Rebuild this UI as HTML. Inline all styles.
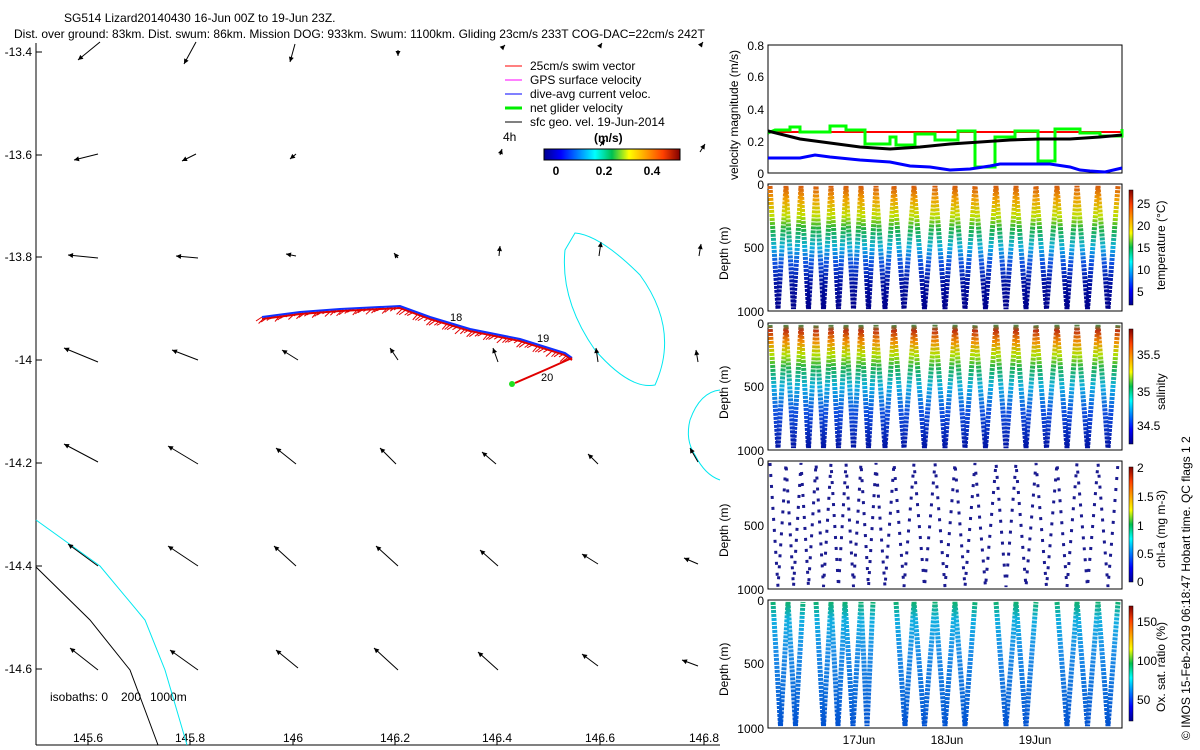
<!DOCTYPE html>
<html><head><meta charset="utf-8"><style>
html,body{margin:0;padding:0;background:#fff;width:1200px;height:750px;overflow:hidden}
svg{display:block;font-family:"Liberation Sans",sans-serif;font-size:12px}
</style></head><body>
<svg id="s" width="1200" height="750" viewBox="0 0 1200 750">
<defs>
<linearGradient id="jet" x1="0" y1="0" x2="1" y2="0">
<stop offset="0" stop-color="#00008f"/><stop offset="0.125" stop-color="#0000ff"/><stop offset="0.375" stop-color="#00ffff"/><stop offset="0.5" stop-color="#00c050"/><stop offset="0.625" stop-color="#ffff00"/><stop offset="0.875" stop-color="#ff4000"/><stop offset="1" stop-color="#800000"/></linearGradient>
<linearGradient id="jetv" x1="0" y1="1" x2="0" y2="0">
<stop offset="0" stop-color="#00008f"/><stop offset="0.125" stop-color="#0000ff"/><stop offset="0.375" stop-color="#00ffff"/><stop offset="0.5" stop-color="#00c050"/><stop offset="0.625" stop-color="#ffff00"/><stop offset="0.875" stop-color="#ff4000"/><stop offset="1" stop-color="#800000"/></linearGradient>
<linearGradient id="tg" gradientUnits="userSpaceOnUse" x1="0" y1="184" x2="0" y2="311">
<stop offset="0" stop-color="#d05010"/><stop offset="0.12" stop-color="#f0a000"/><stop offset="0.25" stop-color="#c0e000"/><stop offset="0.35" stop-color="#20b040"/><stop offset="0.5" stop-color="#10b0e0"/><stop offset="0.62" stop-color="#1050e0"/><stop offset="0.78" stop-color="#0010a0"/><stop offset="1" stop-color="#00008a"/></linearGradient>
<linearGradient id="sg" gradientUnits="userSpaceOnUse" x1="0" y1="323" x2="0" y2="450">
<stop offset="0" stop-color="#20b060"/><stop offset="0.06" stop-color="#c03010"/><stop offset="0.15" stop-color="#f09000"/><stop offset="0.25" stop-color="#b0e000"/><stop offset="0.35" stop-color="#20b050"/><stop offset="0.5" stop-color="#10b0e0"/><stop offset="0.7" stop-color="#1050e0"/><stop offset="1" stop-color="#0010a0"/></linearGradient>
<linearGradient id="og" gradientUnits="userSpaceOnUse" x1="0" y1="600" x2="0" y2="728">
<stop offset="0" stop-color="#10b060"/><stop offset="0.15" stop-color="#10b0e0"/><stop offset="0.4" stop-color="#2090e8"/><stop offset="1" stop-color="#0050d0"/></linearGradient>
</defs>
<!-- titles -->
<text x="64" y="22">SG514 Lizard20140430 16-Jun 00Z to 19-Jun 23Z.</text>
<text x="14" y="38">Dist. over ground: 83km. Dist. swum: 86km. Mission DOG: 933km. Swum: 1100km. Gliding 23cm/s 233T COG-DAC=22cm/s 242T</text>
<!-- map axes -->
<line x1="36" y1="43" x2="36" y2="745" stroke="#000"/>
<line x1="36" y1="745" x2="720" y2="745" stroke="#000"/>
<g stroke="#000">
<line x1="36" y1="52" x2="42" y2="52"/><line x1="36" y1="155" x2="42" y2="155"/><line x1="36" y1="257" x2="42" y2="257"/><line x1="36" y1="360" x2="42" y2="360"/><line x1="36" y1="463" x2="42" y2="463"/><line x1="36" y1="566" x2="42" y2="566"/><line x1="36" y1="669" x2="42" y2="669"/>
<line x1="88" y1="745" x2="88" y2="739"/><line x1="190" y1="745" x2="190" y2="739"/><line x1="293" y1="745" x2="293" y2="739"/><line x1="395" y1="745" x2="395" y2="739"/><line x1="497" y1="745" x2="497" y2="739"/><line x1="600" y1="745" x2="600" y2="739"/><line x1="704" y1="745" x2="704" y2="739"/>
</g>
<g font-size="12" text-anchor="end">
<text x="32" y="56">-13.4</text><text x="32" y="159">-13.6</text><text x="32" y="261">-13.8</text><text x="32" y="364">-14</text><text x="32" y="467">-14.2</text><text x="32" y="570">-14.4</text><text x="32" y="673">-14.6</text></g>
<g font-size="12" text-anchor="middle">
<text x="88" y="742">145.6</text><text x="190" y="742">145.8</text><text x="293" y="742">146</text><text x="395" y="742">146.2</text><text x="497" y="742">146.4</text><text x="600" y="742">146.6</text><text x="704" y="742">146.8</text></g>
<text x="50" y="701">isobaths: 0</text><text x="121" y="701">200</text><text x="150" y="701">1000m</text>
<!-- contours -->
<path d="M36 520 L100 566 L145 620 L165 670 L187 745" fill="none" stroke="#00e8f0"/>
<path d="M36 567 L90 620 L130 670 L145 710 L158 745" fill="none" stroke="#000"/>
<path d="M575 233 Q600 235 640 275 Q680 330 655 385 Q630 390 595 350 Q560 300 565 250 Z" fill="none" stroke="#00e8f0"/>
<path d="M720 390 Q700 392 690 420 Q685 440 695 455 Q705 475 720 480" fill="none" stroke="#00e8f0"/>
<!-- track -->
<g id="trk"></g>
<path d="M262 317 L300 312 L340 309 L400 306 L430 317 L470 329 L520 339 L565 353 L572 358" fill="none" stroke="#1030ff" stroke-width="2"/>
<path d="M572 358 L545 370 L515 383" fill="none" stroke="#e00000" stroke-width="2"/>
<circle cx="512" cy="384" r="3" fill="#20e020"/>
<text x="450" y="321" font-size="11">18</text><text x="537" y="342" font-size="11">19</text><text x="541" y="381" font-size="11">20</text>
<!-- legend -->
<g font-size="12">
<line x1="505" y1="66" x2="522" y2="66" stroke="#f00"/><text x="530" y="70">25cm/s swim vector</text>
<line x1="505" y1="80" x2="522" y2="80" stroke="#f0f"/><text x="530" y="84">GPS surface velocity</text>
<line x1="505" y1="94" x2="522" y2="94" stroke="#00f"/><text x="530" y="98">dive-avg current veloc.</text>
<line x1="505" y1="108" x2="522" y2="108" stroke="#0e0" stroke-width="3"/><text x="530" y="112">net glider velocity</text>
<line x1="505" y1="122" x2="522" y2="122" stroke="#000"/><text x="530" y="126">sfc geo. vel. 19-Jun-2014</text>
<text x="503" y="141">4h</text>
<text x="594" y="142" font-weight="bold">(m/s)</text>
<rect x="544" y="149" width="136" height="11" fill="url(#jet)" stroke="#000"/>
<text x="556" y="175" font-weight="bold" text-anchor="middle">0</text>
<text x="604" y="175" font-weight="bold" text-anchor="middle">0.2</text>
<text x="652" y="175" font-weight="bold" text-anchor="middle">0.4</text>
</g>
<!-- right panels -->
<g fill="none" stroke="#000">
<rect x="768" y="45" width="354" height="128"/>
<rect x="768" y="184" width="354" height="127"/>
<rect x="768" y="323" width="354" height="127"/>
<rect x="768" y="461" width="354" height="128"/>
<rect x="768" y="600" width="354" height="128"/>
</g>
<g font-size="12" text-anchor="end">
<text x="764" y="50">0.8</text><text x="764" y="81">0.6</text><text x="764" y="114">0.4</text><text x="764" y="146">0.2</text><text x="764" y="178">0</text>
<text x="764" y="189">0</text><text x="764" y="252">500</text><text x="764" y="316">1000</text>
<text x="764" y="328">0</text><text x="764" y="391">500</text><text x="764" y="455">1000</text>
<text x="764" y="466">0</text><text x="764" y="530">500</text><text x="764" y="594">1000</text>
<text x="764" y="605">0</text><text x="764" y="668">500</text><text x="764" y="733">1000</text>
</g>
<g font-size="12" text-anchor="middle">
<text x="859" y="744">17Jun</text><text x="947" y="744">18Jun</text><text x="1035" y="744">19Jun</text></g>
<text transform="translate(738,180) rotate(-90)" font-size="12">velocity magnitude (m/s)</text>
<text transform="translate(728,280) rotate(-90)">Depth (m)</text>
<text transform="translate(728,419) rotate(-90)">Depth (m)</text>
<text transform="translate(728,557) rotate(-90)">Depth (m)</text>
<text transform="translate(728,696) rotate(-90)">Depth (m)</text>
<!-- colorbars -->
<rect x="1129" y="190" width="4" height="115" fill="url(#jetv)" stroke="#000" stroke-width="0.5"/>
<rect x="1129" y="329" width="4" height="115" fill="url(#jetv)" stroke="#000" stroke-width="0.5"/>
<rect x="1129" y="467" width="4" height="115" fill="url(#jetv)" stroke="#000" stroke-width="0.5"/>
<rect x="1129" y="606" width="4" height="115" fill="url(#jetv)" stroke="#000" stroke-width="0.5"/>
<g font-size="12">
<text x="1137" y="208">25</text><text x="1137" y="230">20</text><text x="1137" y="252">15</text><text x="1137" y="274">10</text><text x="1137" y="296">5</text>
<text x="1137" y="359">35.5</text><text x="1137" y="396">35</text><text x="1137" y="430">34.5</text>
<text x="1137" y="472">2</text><text x="1137" y="501">1.5</text><text x="1137" y="530">1</text><text x="1137" y="558">0.5</text><text x="1137" y="586">0</text>
<text x="1137" y="626">150</text><text x="1137" y="665">100</text><text x="1137" y="704">50</text>
</g>
<text transform="translate(1165,290) rotate(-90)">temperature (°C)</text>
<text transform="translate(1165,410) rotate(-90)">salinity</text>
<text transform="translate(1165,568) rotate(-90)">chl-a (mg m-3)</text>
<text transform="translate(1165,712) rotate(-90)">Ox. sat. ratio (%)</text>
<text transform="translate(1190,740) rotate(-90)">© IMOS 15-Feb-2019 06:18:47 Hobart time. QC flags 1  2</text>
<!-- velocity lines -->
<polyline fill="none" stroke="#f00" stroke-width="2" points="768,132 1122,132"/>
<polyline fill="none" stroke="#0f0" stroke-width="3" points="768,133 775,130 790,130 790,127 800,127 800,132 830,132 830,126 846,126 846,130 865,130 865,144 890,144 890,137 896,137 896,145 915,145 915,134 935,134 935,140 958,140 958,131 975,131 975,167 995,167 995,137 1015,137 1015,131 1038,131 1038,161 1055,161 1055,129 1080,129 1080,133 1100,133 1100,136 1122,136 1122,129"/>
<polyline fill="none" stroke="#000" stroke-width="3" points="768,131 800,139 830,143 860,147 890,149 920,147 950,144 980,142 1010,140 1040,139 1070,139 1100,137 1122,135"/>
<polyline fill="none" stroke="#00f" stroke-width="3" points="768,158 800,158 815,155 830,157 860,160 890,162 910,166 930,167 950,170 970,169 990,166 1000,164 1050,164 1070,167 1080,170 1090,171 1105,172 1122,168"/>
</svg>
<script>
var s=document.getElementById('s'),ns='http://www.w3.org/2000/svg';
function el(t,a,p){var e=document.createElementNS(ns,t);for(var k in a)e.setAttribute(k,a[k]);(p||s).appendChild(e);return e;}
function zig(y0,y1,tops,stroke,w,dash){var p=[];for(var i=0;i<tops.length;i++){p.push(tops[i]+','+y0);if(i<tops.length-1)p.push(((tops[i]+tops[i+1])/2)+','+y1);}
el('polyline',{points:p.join(' '),fill:'none',stroke:stroke,'stroke-width':w,'stroke-dasharray':dash||'none'});}
var tops1=[770,786,801,816,831,846,861,876,894,914,935,955,975,996,1016,1036,1057,1077,1098,1118];
zig(186,309,tops1,'url(#tg)',5,'3 1');
zig(325,448,tops1,'url(#sg)',5,'3 1');
zig(463,587,tops1,'#1a1a90',3,'3 8');
// oxygen: groups with gaps
var og=[[773,788,803],[816,831,845,861,873],[896,914,935,955,975],[996,1016,1036],[1057,1077,1098,1118]];
og.forEach(function(g){zig(602,726,g,'url(#og)',5,'3 1');});
// track swim vectors
var trk=document.getElementById('trk');
var pts=[[262,317],[300,312],[340,309],[400,306],[430,317],[470,329],[520,339],[565,353],[572,358]];
for(var i=0;i<pts.length-1;i++){var a=pts[i],b=pts[i+1];var n=Math.ceil(Math.hypot(b[0]-a[0],b[1]-a[1])/4);
for(var j=0;j<n;j++){var t=j/n,x=a[0]+(b[0]-a[0])*t,y=a[1]+(b[1]-a[1])*t;var dx=-10-((j*7)%5),dy=4+((j*3)%4);
el('line',{x1:x,y1:y,x2:x+dx*0.6,y2:y+dy,stroke:'#e00000','stroke-width':1},trk);}}
el('polyline',{points:pts.map(function(p){return p[0]+','+(p[1]+2)}).join(' '),fill:'none',stroke:'#e00000','stroke-width':2},trk);
var A=[
[100,42,-22,18],[196,42,-12,22],[295,44,-5,18],[398,50,0,6],[502,48,3,-3],[600,46,2,-3],[700,46,3,-4],
[98,154,-24,6],[196,154,-14,7],[296,154,-6,5],[500,155,2,-6],[600,146,5,-6],[700,152,5,-8],
[98,258,-30,-3],[198,258,-22,-2],[296,256,-10,-2],[398,258,-4,-5],[499,256,1,-10],[599,256,2,-14],[699,256,2,-12],
[98,362,-34,-14],[198,360,-26,-10],[298,360,-16,-10],[398,360,-8,-12],[498,362,-5,-14],[598,362,-2,-14],[698,362,-2,-12],
[98,462,-34,-18],[198,464,-30,-18],[296,464,-20,-16],[396,464,-16,-16],[496,464,-14,-12],[598,464,-10,-10],[698,462,-8,-14],
[98,566,-30,-22],[198,566,-30,-20],[296,566,-22,-20],[398,566,-22,-20],[498,566,-18,-16],[598,564,-16,-10],[698,564,-14,-6],
[98,670,-28,-22],[198,670,-28,-20],[298,668,-22,-18],[398,670,-24,-22],[498,670,-20,-18],[598,666,-16,-12],[698,666,-16,-6]];
A.forEach(function(a){var x=a[0],y=a[1],ex=x+a[2],ey=y+a[3];el('line',{x1:x,y1:y,x2:ex,y2:ey,stroke:'#000'});
var L=Math.hypot(a[2],a[3])||1,ux=a[2]/L,uy=a[3]/L,h=5;
el('polygon',{points:ex+','+ey+' '+(ex-ux*h-uy*2.5)+','+(ey-uy*h+ux*2.5)+' '+(ex-ux*h+uy*2.5)+','+(ey-uy*h-ux*2.5),fill:'#000'});});
</script>
</body></html>
